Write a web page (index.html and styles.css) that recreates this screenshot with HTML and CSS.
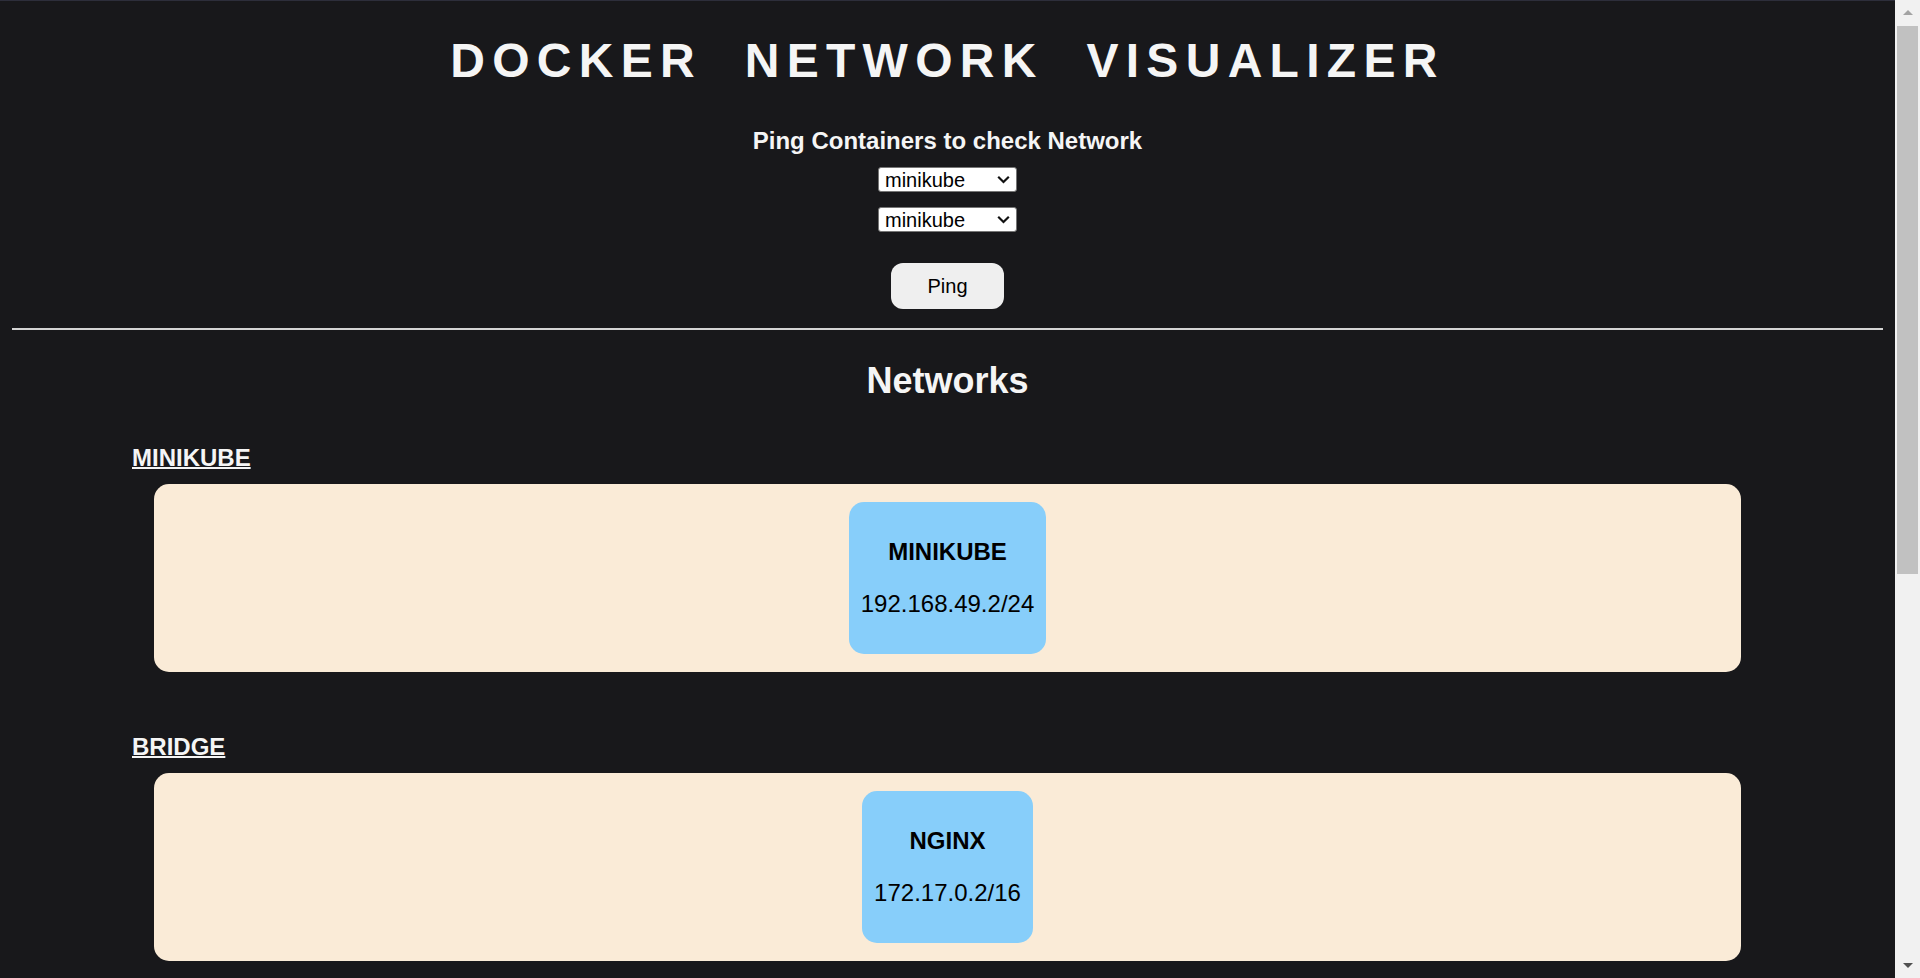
FILE: index.html
```html
<!DOCTYPE html>
<html lang="en">
<head>
<meta charset="utf-8">
<title>Docker Network Visualizer</title>
<link rel="stylesheet" href="styles.css">
</head>
<body>
<header class="top">
  <h1 class="title">DOCKER NETWORK VISUALIZER</h1>
  <h2 class="ping-title">Ping Containers to check Network</h2>
  <form class="ping-form">
    <div class="select-wrap">
      <select class="ping-select">
        <option>minikube</option>
        <option>nginx</option>
      </select>
      <svg class="chevron" width="13" height="9" viewBox="0 0 13 9" aria-hidden="true"><polyline points="1.2,1.8 6.5,7 11.8,1.8" fill="none" stroke="#111" stroke-width="2.2"/></svg>
    </div>
    <div class="select-wrap select-wrap-second">
      <select class="ping-select">
        <option>minikube</option>
        <option>nginx</option>
      </select>
      <svg class="chevron" width="13" height="9" viewBox="0 0 13 9" aria-hidden="true"><polyline points="1.2,1.8 6.5,7 11.8,1.8" fill="none" stroke="#111" stroke-width="2.2"/></svg>
    </div>
    <button class="ping-btn" type="button">Ping</button>
  </form>
</header>
<hr class="divider">
<main class="networks">
  <h2 class="networks-title">Networks</h2>
  <section class="network">
    <a class="network-name" href="#">MINIKUBE</a>
    <div class="network-box">
      <div class="container-card">
        <p class="card-name">MINIKUBE</p>
        <p class="card-ip">192.168.49.2/24</p>
      </div>
    </div>
  </section>
  <section class="network">
    <a class="network-name" href="#">BRIDGE</a>
    <div class="network-box">
      <div class="container-card">
        <p class="card-name">NGINX</p>
        <p class="card-ip">172.17.0.2/16</p>
      </div>
    </div>
  </section>
</main>
<div class="scrollbar" aria-hidden="true">
  <div class="sb-btn"><span class="sb-arrow-up"></span></div>
  <div class="sb-thumb"></div>
  <div class="sb-space"></div>
  <div class="sb-btn"><span class="sb-arrow-down"></span></div>
</div>
</body>
</html>
```
FILE: styles.css
```css
html {
  border-top: 1px solid #2d2e3b;
}

body {
  margin: 0 37px 0 12px;
  background: #18181b;
  color: #f5f5f5;
  font-family: "Liberation Sans", Arial, sans-serif;
}

.top {
  display: flex;
  flex-direction: column;
  align-items: center;
}

.title {
  margin: 33px 0 0;
  font-size: 48px;
  line-height: 54px;
  font-weight: 700;
  letter-spacing: 7.3px;
  word-spacing: 22px;
  color: #f5f5f5;
}

.ping-title {
  margin: 39px 0 0;
  font-size: 24px;
  line-height: 27px;
  font-weight: 700;
}

.ping-form {
  display: flex;
  flex-direction: column;
  align-items: center;
  margin: 13px 0 0;
}

.select-wrap {
  position: relative;
  width: 139px;
  height: 25px;
}

.select-wrap-second {
  margin-top: 15px;
}

.ping-select {
  -webkit-appearance: none;
  appearance: none;
  box-sizing: border-box;
  display: block;
  width: 139px;
  height: 25px;
  margin: 0;
  padding: 1px 0 0 6px;
  font-family: "Liberation Sans", Arial, sans-serif;
  font-size: 20px;
  line-height: 22px;
  color: #000;
  background-color: #fff;
  border: 1px solid #767676;
  border-radius: 3px;
}

.chevron {
  position: absolute;
  right: 7px;
  top: 8px;
  pointer-events: none;
}

.ping-btn {
  margin-top: 31px;
  width: 113px;
  height: 46px;
  border: none;
  border-radius: 12px;
  background: #efefef;
  color: #000;
  font-family: "Liberation Sans", Arial, sans-serif;
  font-size: 20px;
  padding: 0;
}

.divider {
  margin: 19px 0 0;
  height: 0;
  border: 0;
  border-top: 2px solid #d4d4d4;
}

.networks {
  padding-bottom: 695px;
}

.networks-title {
  margin: 31px 0 0;
  text-align: center;
  font-size: 36px;
  line-height: 40px;
  font-weight: 700;
}

.network {
  margin-top: 43px;
}

.network + .network {
  margin-top: 61px;
}

.network-name {
  display: block;
  width: fit-content;
  margin: 0 0 13px 120px;
  font-size: 24px;
  line-height: 27px;
  font-weight: 700;
  color: #f5f5f5;
  text-decoration: underline;
  text-decoration-thickness: 2px;
}

.network-box {
  margin: 0 142px;
  padding: 18px;
  background: #faebd7;
  border-radius: 15px;
  display: flex;
  justify-content: center;
  gap: 18px;
}

.container-card {
  background: #87cefa;
  border-radius: 15px;
  padding: 13px 12px;
  color: #000;
  text-align: center;
}

.card-name {
  margin: 24px 0 25px;
  font-size: 24px;
  line-height: 26px;
  font-weight: 700;
}

.card-ip {
  margin: 24px 0;
  font-size: 24px;
  line-height: 27px;
}

/* simulated browser scrollbar */
.scrollbar {
  position: fixed;
  top: 0;
  right: 0;
  width: 25px;
  height: 100vh;
  background: #f1f1f1;
  display: flex;
  flex-direction: column;
}

.sb-btn {
  height: 25px;
  flex: 0 0 25px;
  display: flex;
  align-items: center;
  justify-content: center;
}

.sb-arrow-up {
  width: 0;
  height: 0;
  border-left: 5.5px solid transparent;
  border-right: 5.5px solid transparent;
  border-bottom: 5px solid #a3a3a3;
}

.sb-arrow-down {
  width: 0;
  height: 0;
  border-left: 5.5px solid transparent;
  border-right: 5.5px solid transparent;
  border-top: 5px solid #505050;
}

.sb-thumb {
  flex: 0 0 548px;
  margin: 1px 2px 0;
  background: #c1c1c1;
}

.sb-space {
  flex: 1 1 auto;
}
```
